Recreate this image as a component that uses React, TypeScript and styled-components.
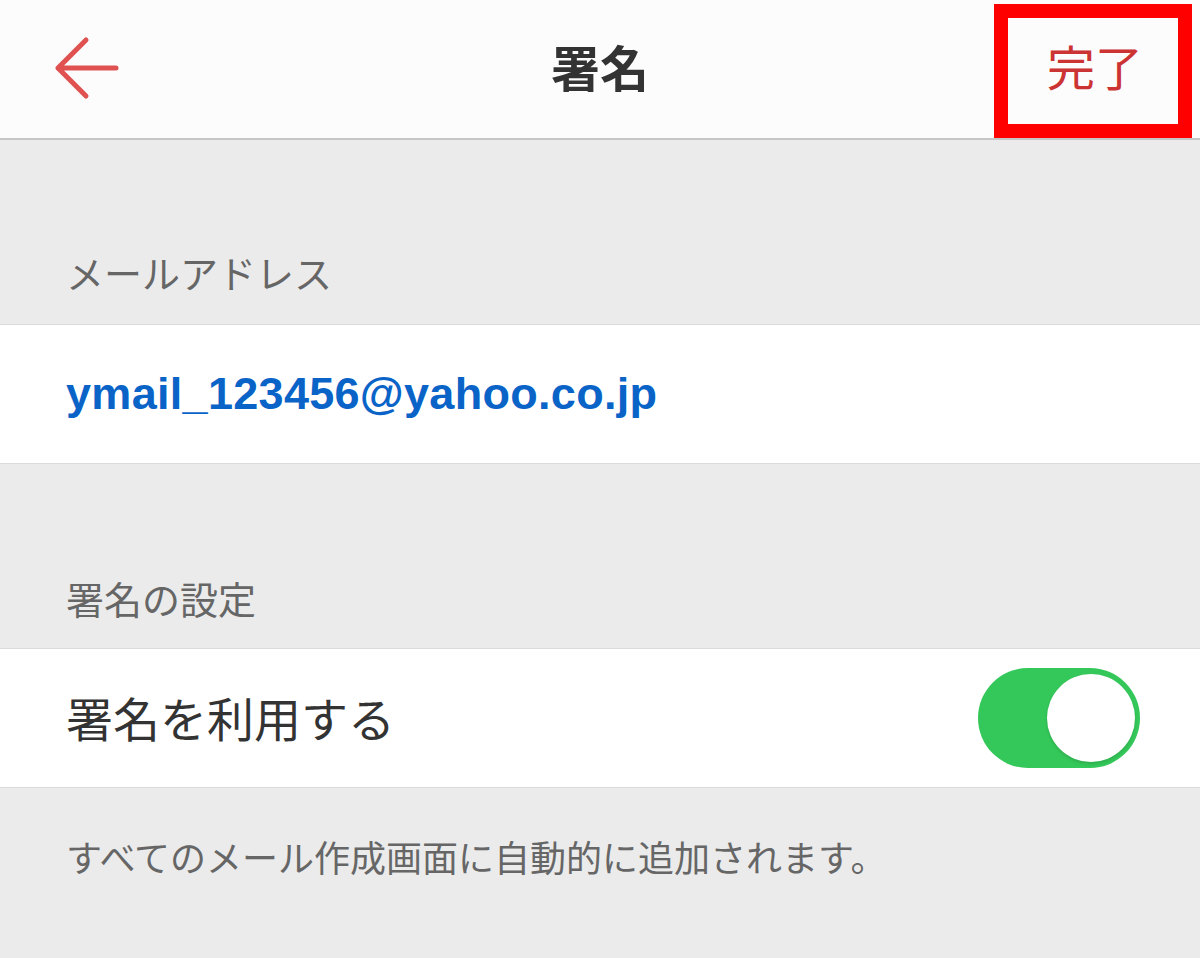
import React from 'react';
import styled, { createGlobalStyle } from 'styled-components';

const GlobalStyle = createGlobalStyle`
    html, body {
        margin: 0;
        padding: 0;
        background: #ebebeb;
    }
    body {
        font-family: "Noto Sans CJK JP", "Noto Sans", sans-serif;
    }
`;

const Page = styled.div`
    width: 1200px;
    height: 958px;
    background: #ebebeb;
    overflow: hidden;
`;

const Header = styled.header`
    position: relative;
    height: 138px;
    background: #fcfcfc;
    border-bottom: 2px solid #c6c6c6;
    display: grid;
    grid-template-columns: 200px 1fr 200px;
    align-items: center;
`;

const BackButton = styled.button`
    border: none;
    background: none;
    padding: 0 0 0 52px;
    height: 100%;
    display: flex;
    align-items: center;
    cursor: pointer;
`;

const Title = styled.h1`
    margin: 0;
    text-align: center;
    font-size: 49px;
    font-weight: 700;
    color: #333;
    line-height: 1;
    transform: translateY(-4px);
`;

const DoneCell = styled.div`
    position: relative;
    height: 100%;
    display: flex;
    justify-content: center;
    align-items: center;
`;

const DoneButton = styled.button`
    border: none;
    background: none;
    padding: 0;
    font-family: inherit;
    font-size: 48px;
    line-height: 1;
    color: #cc3333;
    transform: translate(-5px, -4px);
    cursor: pointer;
`;

const Highlight = styled.div`
    position: absolute;
    left: -6px;
    top: 4px;
    width: 198px;
    height: 134px;
    box-sizing: border-box;
    border: 14px solid #ff0000;
    pointer-events: none;
`;

const SectionHeader = styled.div<{ $bottom: number }>`
    height: 185px;
    box-sizing: border-box;
    display: flex;
    align-items: flex-end;
    padding: 0 0 ${p => p.$bottom}px 66px;
    font-size: 38px;
    line-height: 1;
    color: #666;
    border-bottom: 1px solid #dadada;
`;

const Row = styled.div`
    height: 139px;
    box-sizing: border-box;
    background: #fff;
    border-bottom: 1px solid #dadada;
    display: flex;
    align-items: center;
    justify-content: space-between;
    padding: 0 58px 0 66px;
`;

const Email = styled.span`
    font-family: "Liberation Sans", Arial, sans-serif;
    font-weight: 700;
    font-size: 45px;
    letter-spacing: 0.3px;
    color: #0a64c8;
`;

const RowLabel = styled.span`
    font-size: 47px;
    color: #333;
    line-height: 1;
    transform: translateY(-2px);
`;

const Switch = styled.div<{ $on: boolean }>`
    width: 162px;
    height: 100px;
    border-radius: 50px;
    background: ${p => (p.$on ? '#34c759' : '#e5e5ea')};
    display: flex;
    align-items: center;
    justify-content: ${p => (p.$on ? 'flex-end' : 'flex-start')};
    padding: 0 5px;
    box-sizing: border-box;
    margin-right: 2px;
`;

const Knob = styled.div`
    width: 88px;
    height: 88px;
    border-radius: 50%;
    background: #fff;
    box-shadow: 0 2px 3px rgba(0, 0, 0, 0.12);
`;

const Note = styled.p`
    margin: 0;
    padding: 50px 0 0 66px;
    font-size: 36px;
    line-height: 1;
    color: #666;
`;

const BackArrow = () => (
    <svg width="70" height="70" viewBox="0 0 70 70">
        <path
            d="M6 34 H64 M34 6 L6 34 L34 62"
            fill="none"
            stroke="#e05252"
            strokeWidth="5"
            strokeLinecap="round"
            strokeLinejoin="round"
        />
    </svg>
);

const App = (): JSX.Element => (
    <>
        <GlobalStyle />
        <Page>
            <Header>
                <BackButton aria-label="戻る">
                    <BackArrow />
                </BackButton>
                <Title>署名</Title>
                <DoneCell>
                    <DoneButton>完了</DoneButton>
                    <Highlight />
                </DoneCell>
            </Header>
            <SectionHeader $bottom={33}>メールアドレス</SectionHeader>
            <Row>
                <Email>ymail_123456@yahoo.co.jp</Email>
            </Row>
            <SectionHeader $bottom={31}>署名の設定</SectionHeader>
            <Row>
                <RowLabel>署名を利用する</RowLabel>
                <Switch $on={true}>
                    <Knob />
                </Switch>
            </Row>
            <Note>すべてのメール作成画面に自動的に追加されます。</Note>
        </Page>
    </>
);

export default App;
